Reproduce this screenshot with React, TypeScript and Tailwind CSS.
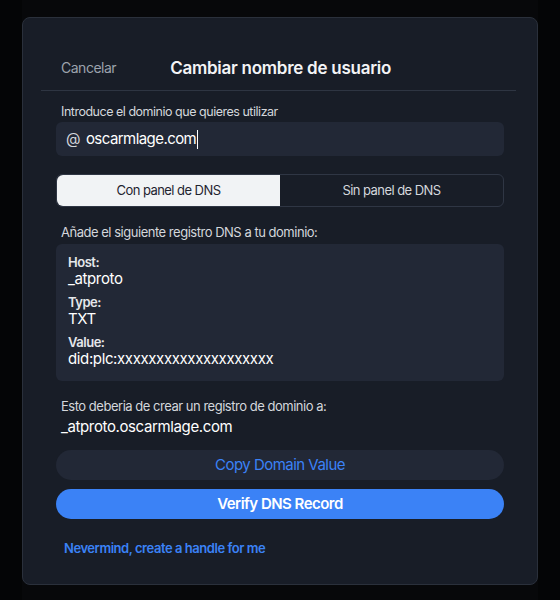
export default function App() {
  const font = { fontFamily: 'Inter, "Noto Sans", sans-serif' };
  return (
    <div className="flex min-h-screen justify-center bg-[#040506] tracking-[-0.03em]" style={font}>
      <div className="w-[516px] bg-[#07080a] pt-[17px]">
        <div className="h-[568px] rounded-lg border border-[#2a303b] bg-[#181d27]">
          <div className="ml-[18px] mr-[21px] flex h-[73px] items-end border-b border-[#2e3542] pb-[12px]">
            <button className="ml-[20px] text-[14px] leading-[20px] tracking-[-0.035em] text-[#9ca3ad]">Cancelar</button>
            <h1 className="ml-[54px] text-[17px] font-semibold leading-[20px] tracking-[-0.015em] text-[#f3f4f6]">
              Cambiar nombre de usuario
            </h1>
          </div>

          <div className="px-[33px]">
            <p className="mt-[12px] pl-[5px] text-[12.5px] leading-[18px] text-[#d4d7dc]">
              Introduce el dominio que quieres utilizar
            </p>
            <div className="mt-[1px] flex h-[34px] items-center rounded-md bg-[#222836] px-[10px] tracking-[-0.035em]">
              <span className="text-[15px] text-[#d4d7dc]">@</span>
              <span className="ml-[6px] text-[15px] text-white">oscarmlage.com</span>
              <span className="ml-px h-[19px] w-px bg-white" />
            </div>

            <div className="mt-[18px] flex h-[33px] rounded-md border border-[#2f3644] tracking-[-0.035em]">
              <button className="flex-1 rounded-l-md bg-[#f1f3f5] text-[13px] text-[#1f2430]">
                Con panel de DNS
              </button>
              <button className="flex-1 text-[13px] text-[#d4d7dc]">Sin panel de DNS</button>
            </div>

            <p className="mt-[16px] pl-[5px] text-[13px] leading-[18px] text-[#d4d7dc]">
              Añade el siguiente registro DNS a tu dominio:
            </p>
            <div className="mt-[3px] flex h-[137px] flex-col gap-[7px] rounded-md bg-[#222836] px-[12px] pt-[11px]">
              {[
                ['Host:', '_atproto'],
                ['Type:', 'TXT'],
                ['Value:', 'did:plc:xxxxxxxxxxxxxxxxxxxx'],
              ].map(([k, v]) => (
                <div key={k}>
                  <div className="text-[13px] font-semibold leading-[15px] text-[#e5e7eb]">{k}</div>
                  <div className="text-[15px] leading-[18px] tracking-[-0.025em] text-white">{v}</div>
                </div>
              ))}
            </div>

            <p className="mt-[16px] pl-[5px] text-[13px] leading-[18px] text-[#d4d7dc]">
              Esto deberia de crear un registro de dominio a:
            </p>
            <p className="mt-[2px] pl-[5px] text-[15px] leading-[20px] tracking-[-0.025em] text-white">
              _atproto.oscarmlage.com
            </p>

            <button className="mt-[13px] h-[30px] w-full rounded-full bg-[#222836] text-[15px] tracking-[-0.035em] text-[#3b82f6]">
              Copy Domain Value
            </button>
            <button className="mt-[9px] h-[30px] w-full rounded-full bg-[#3b82f6] text-[15px] font-semibold tracking-[-0.035em] text-white">
              Verify DNS Record
            </button>

            <button className="mt-[20px] pl-[8px] text-[13px] font-semibold tracking-[-0.035em] text-[#3b82f6]">
              Nevermind, create a handle for me
            </button>
          </div>
        </div>
      </div>
    </div>
  );
}
